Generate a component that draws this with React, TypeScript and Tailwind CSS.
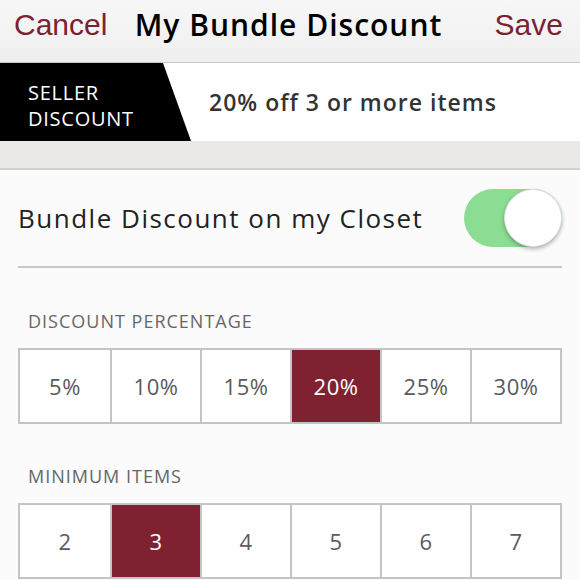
import React from "react";

const pct = ["5%", "10%", "15%", "20%", "25%", "30%"];
const items = ["2", "3", "4", "5", "6", "7"];

function Grid({ values, selected }: { values: string[]; selected: string }) {
  return (
    <div className="mx-[18px] grid grid-cols-6 border-2 border-[#c4c4c4] bg-white">
      {values.map((v, i) => (
        <div
          key={v}
          className={
            "flex h-[72px] items-center justify-center text-[22px] tracking-[0.5px] " +
            (i > 0 ? "border-l-2 border-[#c4c4c4] " : "") +
            (v === selected ? "bg-[#7f2131] text-white" : "text-[#5a5a5a]")
          }
        >
          {v}
        </div>
      ))}
    </div>
  );
}

export default function App() {
  return (
    <div className="h-[580px] w-[580px] overflow-hidden bg-[#fbfbfb] font-['Open_Sans',sans-serif]">
      {/* header */}
      <div className="grid h-[63px] grid-cols-[1fr_auto_1fr] items-start border-b border-[#c8c8c8] bg-gradient-to-b from-[#f7f7f7] to-[#efefef] pl-[14px] pr-[17px] pt-[7px]">
        <span className="justify-self-start font-['Liberation_Sans',Arial,sans-serif] text-[30px] leading-[36px] text-[#7b2231]">Cancel</span>
        <span className="text-[30px] font-semibold leading-[36px] tracking-[1px] text-black">My Bundle Discount</span>
        <span className="justify-self-end font-['Liberation_Sans',Arial,sans-serif] text-[30px] leading-[36px] text-[#7b2231]">Save</span>
      </div>
      {/* seller banner */}
      <div className="relative flex h-[78px] items-center bg-white">
        <svg className="absolute left-0 top-0" width="191" height="78" viewBox="0 0 191 78">
          <polygon points="0,0 163,0 191,78 0,78" fill="#000" />
        </svg>
        <div className="relative z-10 w-[209px] pl-[28px] pt-[7px] text-[20px] uppercase leading-[26px] tracking-[0.75px] text-white">
          Seller
          <br />
          Discount
        </div>
        <div className="relative z-10 text-[23px] font-semibold tracking-[1px] text-[#333]">20% off 3 or more items</div>
      </div>
      {/* texture band */}
      <div className="h-[29px] border-b-2 border-[#d3d1ce] bg-[#ebe9e6]" />
      {/* toggle row */}
      <div className="mx-[18px] flex h-[98px] items-center justify-between border-b-2 border-[#c8c8c8]">
        <span className="text-[26px] tracking-[1.5px] text-[#222]">Bundle Discount on my Closet</span>
        <div className="relative h-[58px] w-[98px] rounded-full bg-[#8cdd94]">
          <div className="absolute right-0 top-0 h-[58px] w-[58px] rounded-full border border-[#e0e0e0] bg-white shadow-[0_2px_4px_rgba(0,0,0,0.3)]" />
        </div>
      </div>
      {/* discount percentage */}
      <div className="px-[28px] pb-[16px] pt-[42px] text-[18px] uppercase leading-[22px] tracking-[1px] text-[#666]">
        Discount Percentage
      </div>
      <Grid values={pct} selected="20%" />
      <div className="px-[28px] pb-[16px] pt-[41px] text-[18px] uppercase leading-[22px] tracking-[1px] text-[#666]">
        Minimum Items
      </div>
      <Grid values={items} selected="3" />
    </div>
  );
}
